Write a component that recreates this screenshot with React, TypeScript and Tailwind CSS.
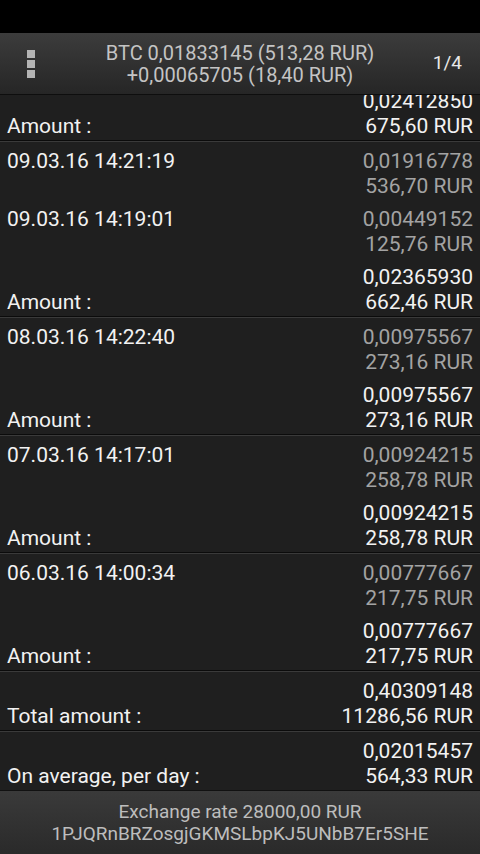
type Block = {
  label: string;
  btc: string;
  rur: string;
  total?: boolean;
};

const groups: Block[][] = [
  [{ label: "Amount :", btc: "0,02412850", rur: "675,60 RUR", total: true }],
  [
    { label: "09.03.16 14:21:19", btc: "0,01916778", rur: "536,70 RUR" },
    { label: "09.03.16 14:19:01", btc: "0,00449152", rur: "125,76 RUR" },
    { label: "Amount :", btc: "0,02365930", rur: "662,46 RUR", total: true },
  ],
  [
    { label: "08.03.16 14:22:40", btc: "0,00975567", rur: "273,16 RUR" },
    { label: "Amount :", btc: "0,00975567", rur: "273,16 RUR", total: true },
  ],
  [
    { label: "07.03.16 14:17:01", btc: "0,00924215", rur: "258,78 RUR" },
    { label: "Amount :", btc: "0,00924215", rur: "258,78 RUR", total: true },
  ],
  [
    { label: "06.03.16 14:00:34", btc: "0,00777667", rur: "217,75 RUR" },
    { label: "Amount :", btc: "0,00777667", rur: "217,75 RUR", total: true },
  ],
  [{ label: "Total amount :", btc: "0,40309148", rur: "11286,56 RUR", total: true }],
  [{ label: "On average, per day :", btc: "0,02015457", rur: "564,33 RUR", total: true }],
];

function Row({ block, first }: { block: Block; first?: boolean }) {
  const valueColor = block.total ? "text-[#f2f2f2]" : "text-[#a3a3a3]";
  return (
    <div
      className={`flex justify-between px-[7px] pt-[7px] pb-[1px] text-[21px] leading-[25px] ${
        first ? "-mt-[13px]" : ""
      }`}
    >
      <div className="flex flex-col text-[#f2f2f2]">
        {block.total ? (
          <>
            <span>&nbsp;</span>
            <span>{block.label}</span>
          </>
        ) : (
          <span>{block.label}</span>
        )}
      </div>
      <div className={`flex flex-col items-end ${valueColor}`}>
        <span>{block.btc}</span>
        <span>{block.rur}</span>
      </div>
    </div>
  );
}

function Separator() {
  return (
    <div>
      <div className="h-px bg-[#0b0b0b]" />
      <div className="h-px bg-[#3a3a3a]" />
    </div>
  );
}

export default function App() {
  return (
    <div
      className="w-[480px] h-[854px] flex flex-col bg-[#1f1f1f] overflow-hidden"
      style={{ fontFamily: "Roboto, 'Noto Sans', sans-serif" }}
    >
      <div className="h-[33px] bg-black" />
      <div className="h-[62px] grid grid-cols-[1fr_auto_1fr] items-center bg-gradient-to-b from-[#3c3c3c] to-[#262626] border-b border-[#0e0e0e]">
        <div className="pl-[27px] flex flex-col gap-[2px]">
          <span className="w-[8px] h-[8px] bg-[#b4b4b4]" />
          <span className="w-[8px] h-[8px] bg-[#b4b4b4]" />
          <span className="w-[8px] h-[8px] bg-[#b4b4b4]" />
        </div>
        <div className="flex flex-col items-center text-[20px] leading-[22px] text-[#c4c4c4]">
          <span>BTC 0,01833145 (513,28 RUR)</span>
          <span>+0,00065705 (18,40 RUR)</span>
        </div>
        <div className="flex justify-end pr-[18px] text-[19px] text-[#e8e8e8]">1/4</div>
      </div>
      <div className="flex-1 overflow-hidden">
        {groups.map((group, gi) => (
          <div key={gi}>
            {group.map((block, bi) => (
              <Row key={bi} block={block} first={gi === 0 && bi === 0} />
            ))}
            <Separator />
          </div>
        ))}
      </div>
      <div className="h-[64px] shrink-0 flex flex-col items-center justify-center bg-gradient-to-b from-[#3a3a3a] to-[#2a2a2a] border-t border-[#111111] text-[19px] leading-[22px] text-[#bdbdbd]">
        <span>Exchange rate 28000,00 RUR</span>
        <span>1PJQRnBRZosgjGKMSLbpKJ5UNbB7Er5SHE</span>
      </div>
    </div>
  );
}
